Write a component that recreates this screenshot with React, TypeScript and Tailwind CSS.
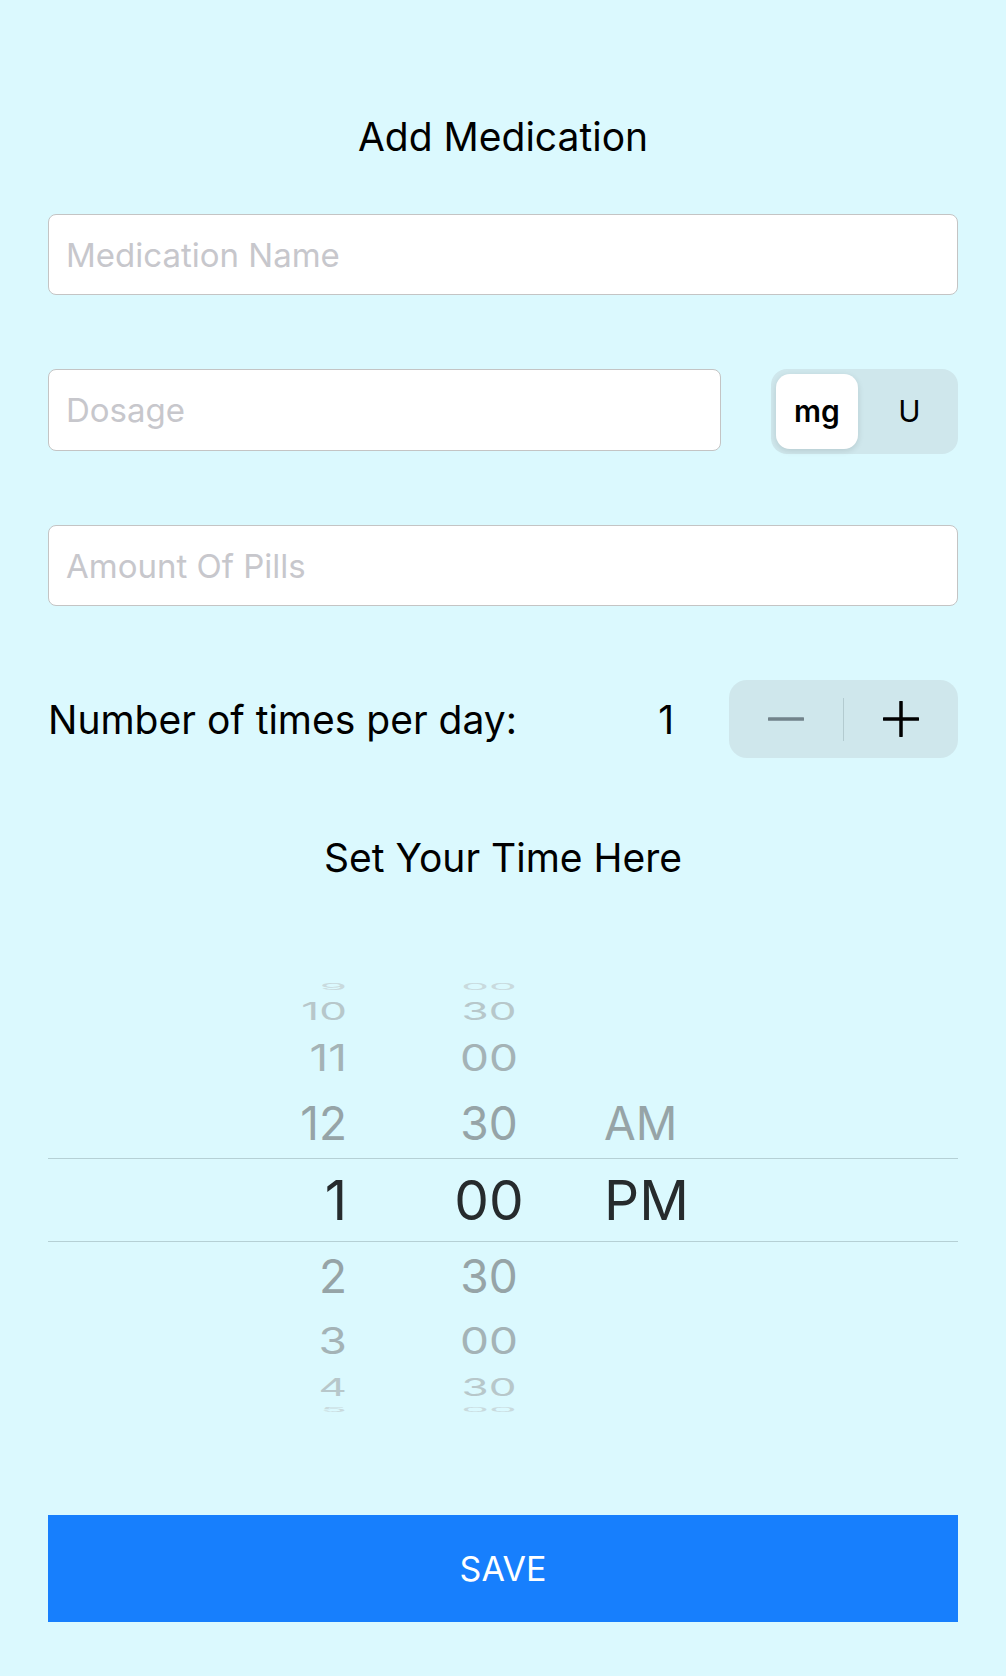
import { useState } from 'react';

type PickerRow = {
  h: string;
  hour: string;
  minute: string;
  ampm: string;
  text: string;
  color: string;
  scale: string;
  selected?: boolean;
};

const rows: PickerRow[] = [
  { h: 'h-[18px]', hour: '9', minute: '00', ampm: '', text: 'text-[44px]', color: 'text-[#c9dadd]', scale: 'scale-y-[0.2]' },
  { h: 'h-[30px]', hour: '10', minute: '30', ampm: '', text: 'text-[44px]', color: 'text-[#b7c7ca]', scale: 'scale-y-[0.56]' },
  { h: 'h-[62px]', hour: '11', minute: '00', ampm: '', text: 'text-[46px]', color: 'text-[#a4b3b6]', scale: 'scale-y-[0.8]' },
  { h: 'h-[70px]', hour: '12', minute: '30', ampm: 'AM', text: 'text-[46px]', color: 'text-[#96a4a7]', scale: 'scale-y-100' },
  { h: 'h-[84px]', hour: '1', minute: '00', ampm: 'PM', text: 'text-[55px]', color: 'text-[#262b2d]', scale: 'scale-y-100', selected: true },
  { h: 'h-[68px]', hour: '2', minute: '30', ampm: '', text: 'text-[46px]', color: 'text-[#96a4a7]', scale: 'scale-y-100' },
  { h: 'h-[60px]', hour: '3', minute: '00', ampm: '', text: 'text-[46px]', color: 'text-[#a4b3b6]', scale: 'scale-y-[0.8]' },
  { h: 'h-[34px]', hour: '4', minute: '30', ampm: '', text: 'text-[44px]', color: 'text-[#b7c7ca]', scale: 'scale-y-[0.56]' },
  { h: 'h-[12px]', hour: '5', minute: '00', ampm: '', text: 'text-[44px]', color: 'text-[#c9dadd]', scale: 'scale-y-[0.15]' },
];

export default function App() {
  const [unit, setUnit] = useState<'mg' | 'U'>('mg');
  const [times, setTimes] = useState(1);

  const inputClass =
    'w-full bg-white border-[1.5px] border-[#c4c4c4] rounded-lg px-[17px] text-[33px] text-black outline-none placeholder:text-[#c7c7cc]';

  return (
    <div
      className="min-h-screen bg-[#dbf9fe] px-[48px] pt-[117px] pb-[53px]"
      style={{ fontFamily: 'Inter, "Liberation Sans", sans-serif' }}
    >
      <h1 className="text-center text-[39px] leading-none text-black">Add Medication</h1>

      <input className={`${inputClass} h-[81px] mt-[58px]`} placeholder="Medication Name" />

      <div className="flex items-start gap-[50px] mt-[74px] h-[85px]">
        <input className={`${inputClass} h-[82px] flex-1`} placeholder="Dosage" />
        <div className="w-[187px] h-[85px] bg-[#cfe7ec] rounded-[16px] p-[5px] flex">
          <button
            onClick={() => setUnit('mg')}
            className={`w-[82px] h-full rounded-[14px] text-[30px] font-semibold text-black ${
              unit === 'mg' ? 'bg-white shadow-[0_2px_6px_rgba(0,0,0,0.12)]' : ''
            }`}
          >
            mg
          </button>
          <button
            onClick={() => setUnit('U')}
            className={`flex-1 h-full rounded-[14px] pl-[8px] text-[30px] text-black ${
              unit === 'U' ? 'bg-white shadow-[0_2px_6px_rgba(0,0,0,0.12)] font-semibold' : ''
            }`}
          >
            U
          </button>
        </div>
      </div>

      <input className={`${inputClass} h-[81px] mt-[71px]`} placeholder="Amount Of Pills" />

      <div className="flex items-center mt-[74px] h-[78px]">
        <span className="flex-1 text-[39px] leading-none text-black">Number of times per day:</span>
        <span className="text-[39px] leading-none text-black mr-[55px]">{times}</span>
        <div className="w-[229px] h-[78px] bg-[#cfe7ec] rounded-[18px] flex items-center">
          <button onClick={() => setTimes(Math.max(1, times - 1))} className="flex-1 h-full flex items-center justify-center">
            <svg width="36" height="36" viewBox="0 0 36 36">
              <line x1="1" y1="18" x2="35" y2="18" stroke="#72838a" strokeWidth="3.5" strokeLinecap="round" />
            </svg>
          </button>
          <div className="w-px h-[43px] bg-[#b3cbd0]" />
          <button onClick={() => setTimes(times + 1)} className="flex-1 h-full flex items-center justify-center">
            <svg width="36" height="36" viewBox="0 0 36 36">
              <line x1="1" y1="18" x2="35" y2="18" stroke="#000" strokeWidth="3.5" strokeLinecap="round" />
              <line x1="18" y1="1" x2="18" y2="35" stroke="#000" strokeWidth="3.5" strokeLinecap="round" />
            </svg>
          </button>
        </div>
      </div>

      <h2 className="text-center text-[39px] leading-none text-black mt-[80px]">Set Your Time Here</h2>

      <div className="mt-[101px] flex flex-col overflow-hidden">
        {rows.map((r, i) => (
          <div
            key={i}
            className={`${r.h} flex items-center ${r.selected ? 'border-y border-[#b5d0d5]' : ''}`}
          >
            <div className={`w-[299px] text-right leading-none ${r.text} ${r.color} ${r.scale}`}>{r.hour}</div>
            <div className={`ml-[72px] w-[140px] text-center leading-none ${r.text} ${r.color} ${r.scale}`}>{r.minute}</div>
            <div className={`ml-[45px] leading-none ${r.text} ${r.color} ${r.scale}`}>{r.ampm}</div>
          </div>
        ))}
      </div>

      <button className="mt-[99px] w-full h-[107px] bg-[#177ffd] text-white text-[34px] leading-none">SAVE</button>
    </div>
  );
}
